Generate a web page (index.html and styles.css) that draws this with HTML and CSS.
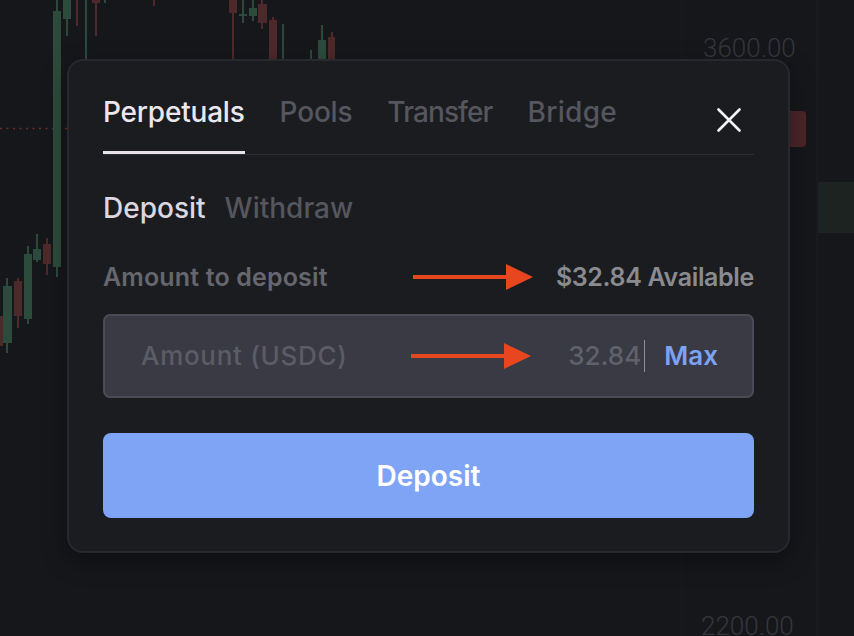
FILE: index.html
```html
<!DOCTYPE html>
<html lang="en">
<head>
<meta charset="utf-8">
<title>Deposit</title>
<link rel="stylesheet" href="styles.css">
</head>
<body>
  <svg class="chart" width="854" height="636" viewBox="0 0 854 636" xmlns="http://www.w3.org/2000/svg">
    <line x1="682" y1="0" x2="682" y2="636" stroke="#1b1c20" stroke-width="1"/>
    <line x1="817" y1="0" x2="817" y2="636" stroke="#1e1f23" stroke-width="1"/>
    <line x1="0" y1="128.5" x2="70" y2="128.5" stroke="#6a2e2e" stroke-width="1.5" stroke-dasharray="2 4.5"/>
    <g class="green">
      <line x1="57" y1="0" x2="57" y2="277"/><rect x="53" y="11" width="8" height="256"/>
      <line x1="67" y1="0" x2="67" y2="36"/><rect x="63" y="0" width="8" height="19"/>
      <line x1="86" y1="0" x2="86" y2="60"/>
      <line x1="105" y1="0" x2="105" y2="3"/>
      <line x1="7" y1="278" x2="7" y2="353"/><rect x="3" y="286" width="9" height="57"/>
      <line x1="28" y1="246" x2="28" y2="324"/><rect x="24" y="254" width="8" height="65"/>
      <line x1="37" y1="234" x2="37" y2="262"/><rect x="33" y="249" width="8" height="11"/>
      <line x1="243" y1="0" x2="243" y2="23"/><rect x="239" y="14" width="8" height="2"/>
      <line x1="253" y1="0" x2="253" y2="21"/><rect x="249" y="8" width="8" height="8"/>
      <line x1="283" y1="24" x2="283" y2="60"/>
      <line x1="311" y1="50" x2="311" y2="60"/>
      <line x1="322" y1="25" x2="322" y2="60"/><rect x="318" y="40" width="8" height="20"/>
    </g>
    <g class="red">
      <rect x="0" y="316" width="3" height="30"/>
      <line x1="18" y1="278" x2="18" y2="328"/><rect x="14" y="281" width="8" height="35"/>
      <line x1="47" y1="238" x2="47" y2="275"/><rect x="43" y="244" width="8" height="20"/>
      <line x1="77" y1="0" x2="77" y2="26"/>
      <line x1="96" y1="0" x2="96" y2="36"/><rect x="92" y="0" width="8" height="3"/>
      <line x1="154" y1="0" x2="154" y2="6"/>
      <line x1="233" y1="0" x2="233" y2="60"/><rect x="229" y="0" width="8" height="13"/>
      <line x1="262" y1="0" x2="262" y2="29"/><rect x="258" y="4" width="9" height="19"/>
      <line x1="273" y1="17" x2="273" y2="60"/><rect x="269" y="20" width="8" height="40"/>
      <line x1="332" y1="32" x2="332" y2="60"/><rect x="328" y="37" width="7" height="23"/>
    </g>
    <rect x="786" y="111" width="20" height="36" rx="4" fill="#4a2628"/>
    <rect x="818" y="182" width="36" height="51" fill="#1c2320"/>
    <text class="axis" x="703" y="57">3600.00</text>
    <text class="axis" x="701" y="635">2200.00</text>
  </svg>

  <div class="modal">
    <div class="tabs">
      <div class="tab active">Perpetuals</div>
      <div class="tab">Pools</div>
      <div class="tab tab-transfer">Transfer</div>
      <div class="tab tab-bridge">Bridge</div>
      <svg class="close" width="24" height="24" viewBox="0 0 24 24" xmlns="http://www.w3.org/2000/svg">
        <path d="M1.5 1.5 L22.5 22.5 M22.5 1.5 L1.5 22.5" stroke="#f2f2f4" stroke-width="2.6" stroke-linecap="round" fill="none"/>
      </svg>
    </div>

    <div class="subtabs">
      <div class="subtab active">Deposit</div>
      <div class="subtab">Withdraw</div>
    </div>

    <div class="label-row">
      <span class="label">Amount to deposit</span>
      <svg class="arrow arrow-top" width="120" height="26" viewBox="0 0 120 26" xmlns="http://www.w3.org/2000/svg">
        <line x1="0" y1="13" x2="95" y2="13" stroke="#e8461e" stroke-width="4"/>
        <polygon points="93,0 120,13 93,26" fill="#e8461e"/>
      </svg>
      <span class="available">$32.84 Available</span>
    </div>

    <div class="input">
      <span class="placeholder">Amount (USDC)</span>
      <svg class="arrow arrow-input" width="120" height="26" viewBox="0 0 120 26" xmlns="http://www.w3.org/2000/svg">
        <line x1="0" y1="13" x2="95" y2="13" stroke="#e8461e" stroke-width="4"/>
        <polygon points="93,0 120,13 93,26" fill="#e8461e"/>
      </svg>
      <span class="value">32.84</span>
      <span class="caret"></span>
      <span class="max">Max</span>
    </div>

    <button class="submit">Deposit</button>
  </div>
</body>
</html>
```

FILE: styles.css
```css
* {
  box-sizing: border-box;
}

html, body {
  margin: 0;
  background: #16171b;
}

body {
  position: relative;
  width: 854px;
  height: 636px;
  overflow: hidden;
  padding: 59px 0 0 67px;
  font-family: Inter, "Noto Sans", sans-serif;
}

.chart {
  position: absolute;
  top: 0;
  left: 0;
  z-index: 0;
}

.chart .green line { stroke: #2b4a3b; stroke-width: 2; }
.chart .green rect { fill: #2d4b3c; }
.chart .red line { stroke: #4f2a2b; stroke-width: 2; }
.chart .red rect { fill: #4d292a; }

.chart .axis {
  font-family: Roboto, "DejaVu Sans", sans-serif;
  font-size: 26px;
  font-weight: 300;
  fill: #35363b;
}

.modal {
  position: relative;
  z-index: 1;
  width: 723px;
  height: 494px;
  background: #1b1c20;
  border: 2px solid #28292e;
  border-radius: 16px;
  padding: 0 34px;
  box-shadow: 0 8px 24px rgba(0, 0, 0, 0.35);
}

.tabs {
  display: flex;
  gap: 35px;
  margin-top: 34px;
  border-bottom: 1px solid #2e2f34;
}

.tab {
  font-size: 28px;
  font-weight: 500;
  line-height: 34px;
  letter-spacing: -0.2px;
  color: #55565e;
  padding-bottom: 22px;
  border-bottom: 3px solid transparent;
}

.tab-transfer {
  letter-spacing: -0.9px;
}

.tab-bridge {
  letter-spacing: 0.3px;
}

.tab.active {
  color: #ece7ef;
  border-bottom-color: #e8e3ea;
}

.close {
  margin-left: auto;
  margin-right: 13px;
  margin-top: 13px;
  align-self: flex-start;
}

.subtabs {
  display: flex;
  gap: 19px;
  margin-top: 36px;
}

.subtab {
  font-size: 28px;
  font-weight: 500;
  line-height: 34px;
  color: #55565e;
}

.subtab.active {
  color: #dcd7e0;
}

.label-row {
  display: flex;
  align-items: center;
  margin-top: 37px;
  height: 30px;
  font-size: 25px;
  font-weight: 600;
  line-height: 30px;
}

.label {
  color: #66676e;
  letter-spacing: 0.15px;
}

.arrow {
  flex: none;
  display: block;
}

.arrow-top {
  margin-left: auto;
  margin-right: 23px;
}

.available {
  color: #8a8b91;
  letter-spacing: -0.35px;
}

.input {
  display: flex;
  align-items: center;
  margin-top: 22px;
  height: 84px;
  background: #3a3a44;
  border: 2px solid #4a4b54;
  border-radius: 7px;
  padding: 0 34px 0 36px;
  font-size: 26px;
  line-height: 30px;
  font-weight: 500;
}

.placeholder {
  color: #5b5c65;
  letter-spacing: 0.7px;
}

.arrow-input {
  margin-left: auto;
  margin-right: 37px;
}

.value {
  color: #60616a;
}

.caret {
  width: 1px;
  height: 32px;
  background: #8d8e96;
  margin-left: 3px;
}

.max {
  margin-left: 19px;
  color: #7ea2f3;
  font-weight: 600;
}

.submit {
  display: block;
  width: 100%;
  height: 85px;
  margin-top: 35px;
  border: none;
  border-radius: 8px;
  background: #80a4f5;
  color: #ffffff;
  font-family: Inter, "Noto Sans", sans-serif;
  font-size: 28px;
  font-weight: 600;
}
```
